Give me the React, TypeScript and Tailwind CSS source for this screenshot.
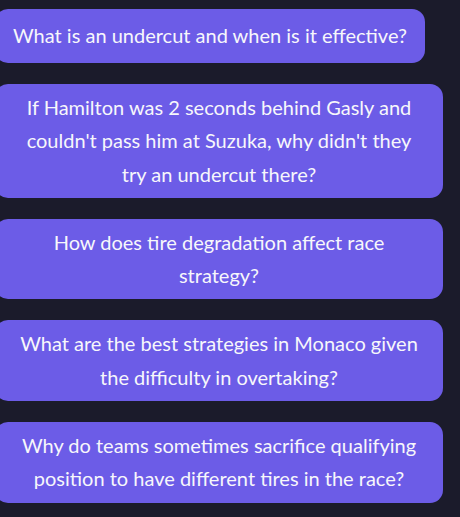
import React from "react";

const questions: React.ReactNode[] = [
  "What is an undercut and when is it effective?",
  <>
    If Hamilton was 2 seconds behind Gasly and
    <br />
    couldn't pass him at Suzuka, why didn't they
    <br />
    try an undercut there?
  </>,
  <>
    How does tire degradation affect race
    <br />
    strategy?
  </>,
  <>
    What are the best strategies in Monaco given
    <br />
    the difficulty in overtaking?
  </>,
  <>
    Why do teams sometimes sacrifice qualifying
    <br />
    position to have different tires in the race?
  </>,
];

export default function App() {
  return (
    <div className="min-h-screen bg-[#1b1b2b] overflow-hidden font-['Lato',sans-serif]">
      <div className="-ml-[5px] w-[448px] pt-[9px] flex flex-col items-start gap-[21px]">
        {questions.map((q, i) => (
          <button
            key={i}
            className={`${i === 0 ? "w-fit" : "w-full"} min-h-[54px] flex items-center justify-center rounded-[13px] bg-[#6c5ce7] px-[18px] py-[7px] text-center text-[20px] leading-[33.3px] text-[#f7f7fb]`}
          >
            <span>{q}</span>
          </button>
        ))}
      </div>
    </div>
  );
}
